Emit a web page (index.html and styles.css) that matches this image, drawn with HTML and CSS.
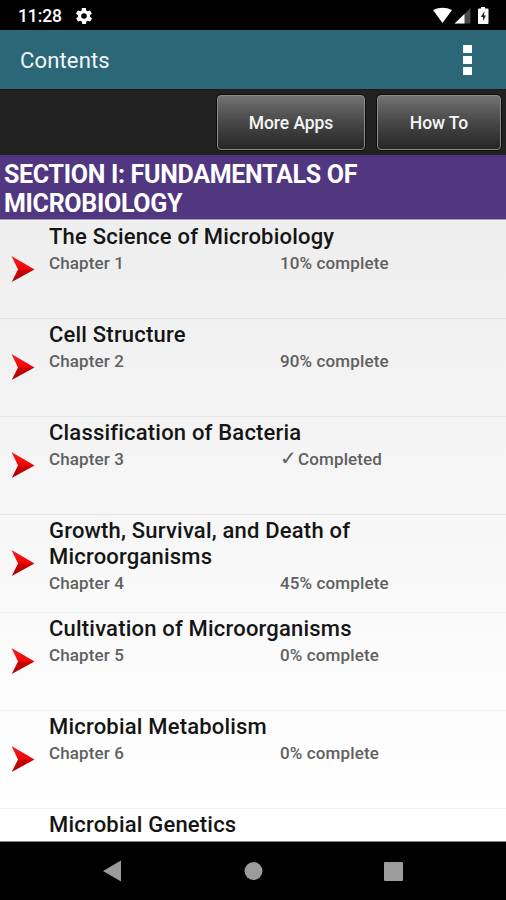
FILE: index.html
```html
<!DOCTYPE html>
<html lang="en">
<head>
<meta charset="utf-8">
<title>Contents</title>
<link rel="stylesheet" href="styles.css">
</head>
<body>
<div class="screen">
  <div class="status">
    <span class="clock">11:28</span>
    <svg class="gear" viewBox="2 2 20 20"><path fill="#fff" fill-rule="evenodd" d="M19.4 13c0-.3.1-.6.1-1s0-.7-.1-1l2.1-1.600c.2-.2.3-.4.1-.7l-2-3.400c-.1-.2-.4-.3-.6-.2l-2.500 1c-.5-.4-1.100-.7-1.700-1l-.4-2.600c0-.3-.2-.5-.5-.5h-4c-.2 0-.4.2-.5.400l-.4 2.700c-.6.200-1.100.600-1.700 1l-2.500-1c-.2-.1-.5 0-.6.200l-2 3.400c-.1.200-.1.500.1.700L4.600 11c0 .3-.1.600-.1 1s0 .7.1 1l-2.100 1.600c-.2.200-.3.400-.1.700l2 3.400c.1.200.4.300.6.200l2.500-1c.5.400 1.100.7 1.700 1l.4 2.600c.1.300.2.500.5.500h4c.2 0 .5-.2.500-.5l.4-2.600c.6-.3 1.200-.6 1.700-1l2.500 1c.2.100.5 0 .6-.2l2-3.400c.1-.2.1-.5-.1-.7zM12 15.500a3.500 3.500 0 1 1 0-7 3.500 3.500 0 0 1 0 7z"/></svg>
    <svg class="indicators" viewBox="0 0 60 18"><path fill="#fff" d="M0 3Q9.500 -1.500 19 3L9.500 16z"/><path fill="#4a4a4a" d="M37.500 1V16.500H22z"/><path fill="#fff" d="M31.500 7v9.500H21.500z"/><path fill="#fff" d="M48 0h4v1.500h2.500q1 0 1 1v13.500q0 1-1 1h-8.500q-1 0-1-1V2.500q0-1 1-1H48z"/><path fill="#222" d="M51.500 4L47.800 10h2.200v4l3-5.500h-2z"/></svg>
  </div>
  <header class="appbar">
    <h1>Contents</h1>
    <div class="more"><i></i><i></i><i></i></div>
  </header>
  <div class="toolbar">
    <button class="btn btn-apps">More Apps</button>
    <button class="btn btn-how">How To</button>
  </div>
  <h2 class="section"><span>SECTION I: FUNDAMENTALS OF</span> <span>MICROBIOLOGY</span></h2>
  <main class="list">
    <article class="row">
      <svg class="arrow" viewBox="0 0 24 28"><path d="M.5 1L23.500 14.500.7 27 7 14.500z"/></svg>
      <div class="info"><h3>The Science of Microbiology</h3><p><span>Chapter 1</span><span>10% complete</span></p></div>
    </article>
    <article class="row">
      <svg class="arrow" viewBox="0 0 24 28"><path d="M.5 1L23.500 14.500.7 27 7 14.500z"/></svg>
      <div class="info"><h3>Cell Structure</h3><p><span>Chapter 2</span><span>90% complete</span></p></div>
    </article>
    <article class="row">
      <svg class="arrow" viewBox="0 0 24 28"><path d="M.5 1L23.500 14.500.7 27 7 14.500z"/></svg>
      <div class="info"><h3>Classification of Bacteria</h3><p><span>Chapter 3</span><span><b class="check">✓</b>Completed</span></p></div>
    </article>
    <article class="row">
      <svg class="arrow" viewBox="0 0 24 28"><path d="M.5 1L23.500 14.500.7 27 7 14.500z"/></svg>
      <div class="info"><h3>Growth, Survival, and Death of<br>Microorganisms</h3><p><span>Chapter 4</span><span>45% complete</span></p></div>
    </article>
    <article class="row">
      <svg class="arrow" viewBox="0 0 24 28"><path d="M.5 1L23.500 14.500.7 27 7 14.500z"/></svg>
      <div class="info"><h3>Cultivation of Microorganisms</h3><p><span>Chapter 5</span><span>0% complete</span></p></div>
    </article>
    <article class="row">
      <svg class="arrow" viewBox="0 0 24 28"><path d="M.5 1L23.500 14.500.7 27 7 14.500z"/></svg>
      <div class="info"><h3>Microbial Metabolism</h3><p><span>Chapter 6</span><span>0% complete</span></p></div>
    </article>
    <article class="row last">
      <div class="info"><h3>Microbial Genetics</h3></div>
    </article>
  </main>
  <nav class="nav">
    <svg viewBox="0 0 506 58"><path fill="#9b9b9b" d="M103 29L121 18.500V39.500z"/><circle cx="253.500" cy="29" r="9" fill="#9b9b9b"/><rect x="384" y="20" width="19" height="19" rx="1" fill="#9b9b9b"/></svg>
  </nav>
  <svg class="defs" width="0" height="0"><defs><linearGradient id="red" x1="0" y1="0" x2="0" y2="1"><stop offset="0" stop-color="#f22020"/><stop offset=".48" stop-color="#f50505"/><stop offset=".58" stop-color="#c80000"/><stop offset="1" stop-color="#a80808"/></linearGradient></defs></svg>
</div>
</body>
</html>
```
FILE: styles.css
```css
* { box-sizing: border-box; }
body { margin: 0; font-family: Roboto, sans-serif; background: #000; }
h1, h2, h3, p { margin: 0; }
.screen { width: 506px; height: 900px; overflow: hidden; display: flex; flex-direction: column; }
.screen > * { flex-shrink: 0; }
.defs { display: block; }
.status { height: 30px; display: flex; align-items: center; padding: 1px 16px 0 18px; color: #fff; }
.clock { width: 58px; font-size: 17.5px; font-weight: 500; line-height: 20px; padding-top: 1px; letter-spacing: -.1px; }
.gear { width: 16px; height: 16px; }
.indicators { width: 60px; height: 18px; margin-left: auto; margin-right: -3px; }
.appbar { height: 59px; background: #2c6777; display: flex; align-items: center; justify-content: space-between; padding: 0 34px 0 20px; color: #f1f7fa; }
h1 { font-size: 22px; font-weight: 400; line-height: 26px; letter-spacing: .15px; padding-top: 2px; }
.more { display: grid; gap: 3px; }
.more i { width: 9px; height: 8px; background: #fff; }
.toolbar { height: 66px; background: #222; display: flex; justify-content: flex-end; gap: 12px; padding: 5px 5px 6px 0; border-top: 1px solid #191919; }
.btn { height: 55px; padding: 0; border: 1.500px solid #8b8b82; border-radius: 4px; background: linear-gradient(#727272, #4b4b4b 45%, #252525); box-shadow: 0 0 0 1px #0c0c0c; color: #f5f5f5; font: 500 17.5px/22px Roboto, sans-serif; letter-spacing: -.05px; }
.btn-apps { width: 148px; }
.btn-how { width: 124px; }
.section { height: 65px; background: #50377f; color: #fff; padding: 6px 4px 0; font-size: 25px; line-height: 28.500px; font-weight: 700; letter-spacing: -.3px; border-bottom: 1px solid #a497bc; }
.section span { display: block; }
.list { height: 622px; background: linear-gradient(#eee, #fff 95%); overflow: hidden; border-bottom: 1px solid #888; }
.row { height: 98px; display: flex; padding-left: 11px; border-top: 1px solid #e5e5e5; }
.row:first-child { border-color: #f5f5f5; }
.row:nth-child(n+5) { border-color: #f2f2f2; }
.arrow { width: 24px; height: 28px; margin: 34px 14px 0 0; flex: none; }
.arrow path { fill: url(#red); }
.info { flex: 1; padding-top: 3px; }
h3 { font-size: 22px; font-weight: 500; line-height: 26px; color: #151515; letter-spacing: .2px; }
p { display: flex; font-size: 17px; font-weight: 500; line-height: 20px; padding-top: 3px; color: #606060; letter-spacing: .13px; }
p span:first-child { width: 231px; }
.check { display: inline-block; width: 18px; font: 700 20px/18px "DejaVu Sans", sans-serif; letter-spacing: 0; }
.last { padding-left: 49px; }
.nav { height: 58px; background: #000; }
.nav svg { width: 506px; height: 58px; display: block; }
```
